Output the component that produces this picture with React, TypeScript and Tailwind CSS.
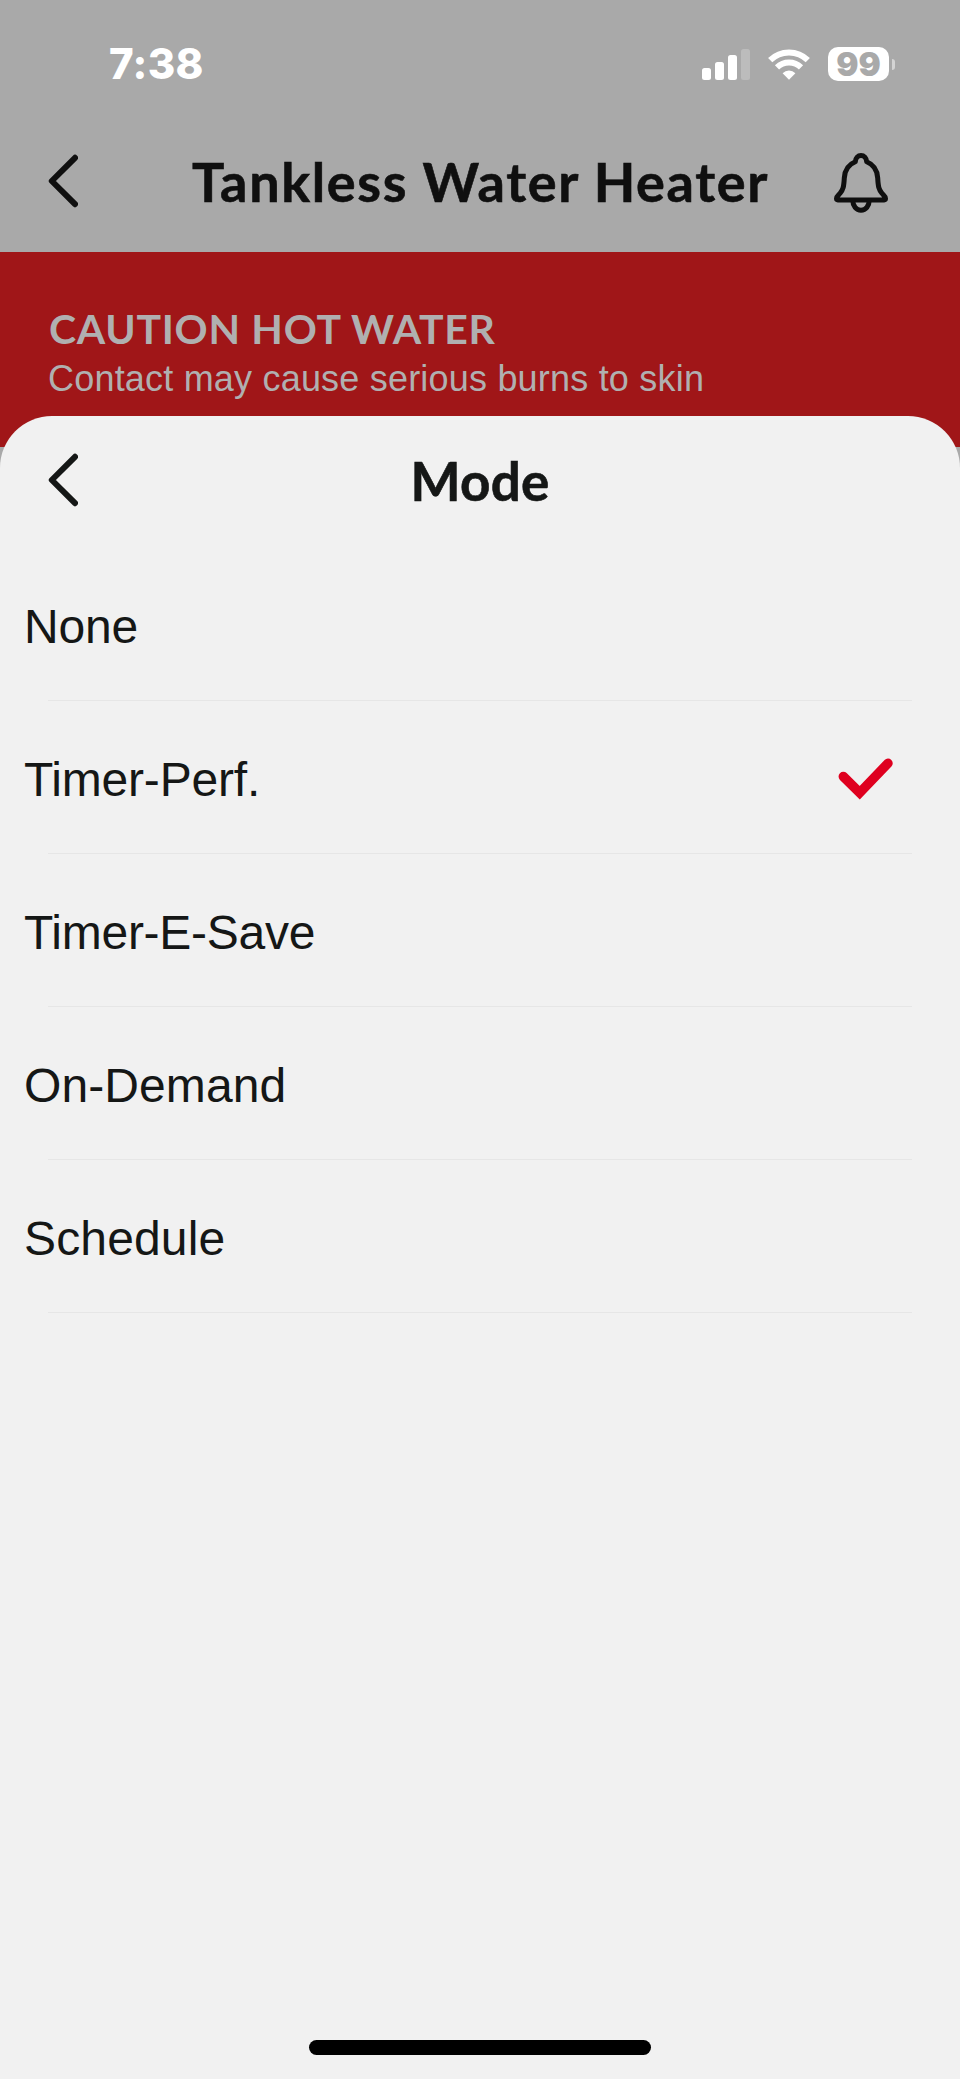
import React from "react";

const modes = [
  { label: "None", tracking: "tracking-[-0.2px]" },
  { label: "Timer-Perf.", tracking: "tracking-[-0.2px]" },
  { label: "Timer-E-Save", tracking: "tracking-[-0.25px]" },
  { label: "On-Demand", tracking: "tracking-[0.1px]" },
  { label: "Schedule", tracking: "tracking-[0.15px]" },
];

function BackIcon() {
  return (
    <svg className="block h-[54px] w-[30px]" viewBox="0 0 30 54" fill="none" stroke="currentColor" strokeWidth="6" strokeLinecap="round" strokeLinejoin="round">
      <path d="M27 3.800 3.800 27 27 50.200" />
    </svg>
  );
}

function BellIcon() {
  return (
    <svg className="block h-[60px] w-[54px]" viewBox="0 0 54 60" fill="none" stroke="currentColor" strokeWidth="5" strokeLinecap="round" strokeLinejoin="round">
      <path d="M21.300 8.800C21.600 5 24 2.600 27 2.600s5.400 2.400 5.700 6.200C39.500 11.500 43.200 16.500 43.700 25c.5 9 1.200 11.500 4.200 15.300 1.500 1.900 3.600 2.800 3.600 5.300 0 .8-.6 1.300-1.300 1.300H3.800c-.7 0-1.300-.5-1.300-1.300 0-2.500 2.100-3.400 3.600-5.300C9.100 36.500 9.800 34 10.300 25 10.800 16.500 14.500 11.500 21.300 8.800Z" />
      <path d="M18.800 47.500c0 5.600 3.400 9.700 8.200 9.700s8.200-4.100 8.200-9.700" />
    </svg>
  );
}

function SignalIcon() {
  return (
    <svg className="block h-[31px] w-[48px]" viewBox="0 0 48 31" fill="#fff">
      <rect x="0" y="19" width="9" height="12" rx="2.500" />
      <rect x="13" y="13" width="9" height="18" rx="2.500" />
      <rect x="26" y="6" width="9" height="25" rx="2.500" />
      <rect x="39" y="0" width="9" height="31" rx="2.500" fillOpacity=".22" />
    </svg>
  );
}

function WifiIcon() {
  return (
    <svg className="block h-[31px] w-[42px]" viewBox="0 0 42 31">
      <path d="M2.200 11.200a26.800 26.800 0 0 1 37.600 0" fill="none" stroke="#fff" strokeWidth="6" />
      <path d="M9 18.400a17.200 17.200 0 0 1 24 0" fill="none" stroke="#fff" strokeWidth="6" />
      <path d="M14.600 24.200a9.200 9.200 0 0 1 12.800 0L21 30.800Z" fill="#fff" />
    </svg>
  );
}

function CheckIcon() {
  return (
    <svg className="block h-[42px] w-[56px]" viewBox="0 0 56 42" fill="none" stroke="#df001f" strokeWidth="9.500" strokeLinecap="round">
      <path d="M5.300 18.500 21.700 34.700 50 5.300" />
    </svg>
  );
}

export default function App() {
  return (
    <div className="flex h-[2079px] w-[960px] flex-col overflow-hidden bg-[#a9a9a9] font-['Liberation_Sans',sans-serif]">
      <header className="h-[252px] shrink-0 text-[#0f0f0f]">
        <div className="flex h-[128px] items-center pl-[109px] pr-[65px] text-white">
          <time className="font-['Inter',sans-serif] text-[42px] font-extrabold leading-[50px] tracking-[0.3px]">7:38</time>
          <div className="ml-auto flex items-center gap-[18px]">
            <SignalIcon />
            <WifiIcon />
            <div className="flex items-center">
              <span className="flex h-[34px] w-[61px] items-center justify-center rounded-[10px] bg-white font-['Inter',sans-serif] text-[33px] font-black leading-none text-[#a9a9a9]">99</span>
              <span className="ml-[3px] h-[11px] w-[3px] rounded-r-full bg-white/50" />
            </div>
          </div>
        </div>
        <div className="flex h-[124px] items-start pl-[48px] pr-[72px]">
          <button className="mt-[26px]" aria-label="Back"><BackIcon /></button>
          <h1 className="ml-[114px] mt-[22px] whitespace-nowrap font-['Lato',sans-serif] text-[54px] font-bold leading-[64px] tracking-[1.65px] [-webkit-text-stroke:0.6px_#0f0f0f]">Tankless Water Heater</h1>
          <button className="ml-auto mt-[25px]" aria-label="Notifications"><BellIcon /></button>
        </div>
      </header>

      <section className="h-[195px] shrink-0 bg-[#a01618] pl-[49px] pt-[52px] text-[#b0b0b0]">
        <h2 className="whitespace-nowrap font-['Lato',sans-serif] text-[41px] font-bold leading-[50px] tracking-[0.7px]">CAUTION HOT WATER</h2>
        <p className="-ml-px whitespace-nowrap text-[36px] leading-[50px] tracking-[0.2px]">Contact may cause serious burns to skin</p>
      </section>

      <main className="relative -mt-[31px] flex flex-1 flex-col rounded-t-[52px] bg-[#f1f1f1] text-[#151716]">
        <div className="flex h-[132px] items-start pl-[48px] pr-[78px]">
          <button className="mt-[37px]" aria-label="Close"><BackIcon /></button>
          <h2 className="mt-[33px] flex-1 whitespace-nowrap text-center font-['Lato',sans-serif] text-[53px] font-bold leading-[64px] tracking-[0.2px] [-webkit-text-stroke:0.6px_#151716]">Mode</h2>
        </div>
        <ul>
          {modes.map((m) => (
            <li key={m.label} className="h-[153px] pl-[24px] pr-[48px]">
              <div className="flex h-[152px] items-center justify-between pt-[6px]">
                <span className={`whitespace-nowrap text-[48px] leading-[56px] ${m.tracking}`}>{m.label}</span>
                {m.label === "Timer-Perf." && <span className="-mt-[2px] mr-[18px]"><CheckIcon /></span>}
              </div>
              <div className="ml-[24px] h-px bg-[#e6e6e6]" />
            </li>
          ))}
        </ul>
        <div className="mx-auto mb-[24px] mt-auto h-[15px] w-[342px] rounded-full bg-black" />
      </main>
    </div>
  );
}
